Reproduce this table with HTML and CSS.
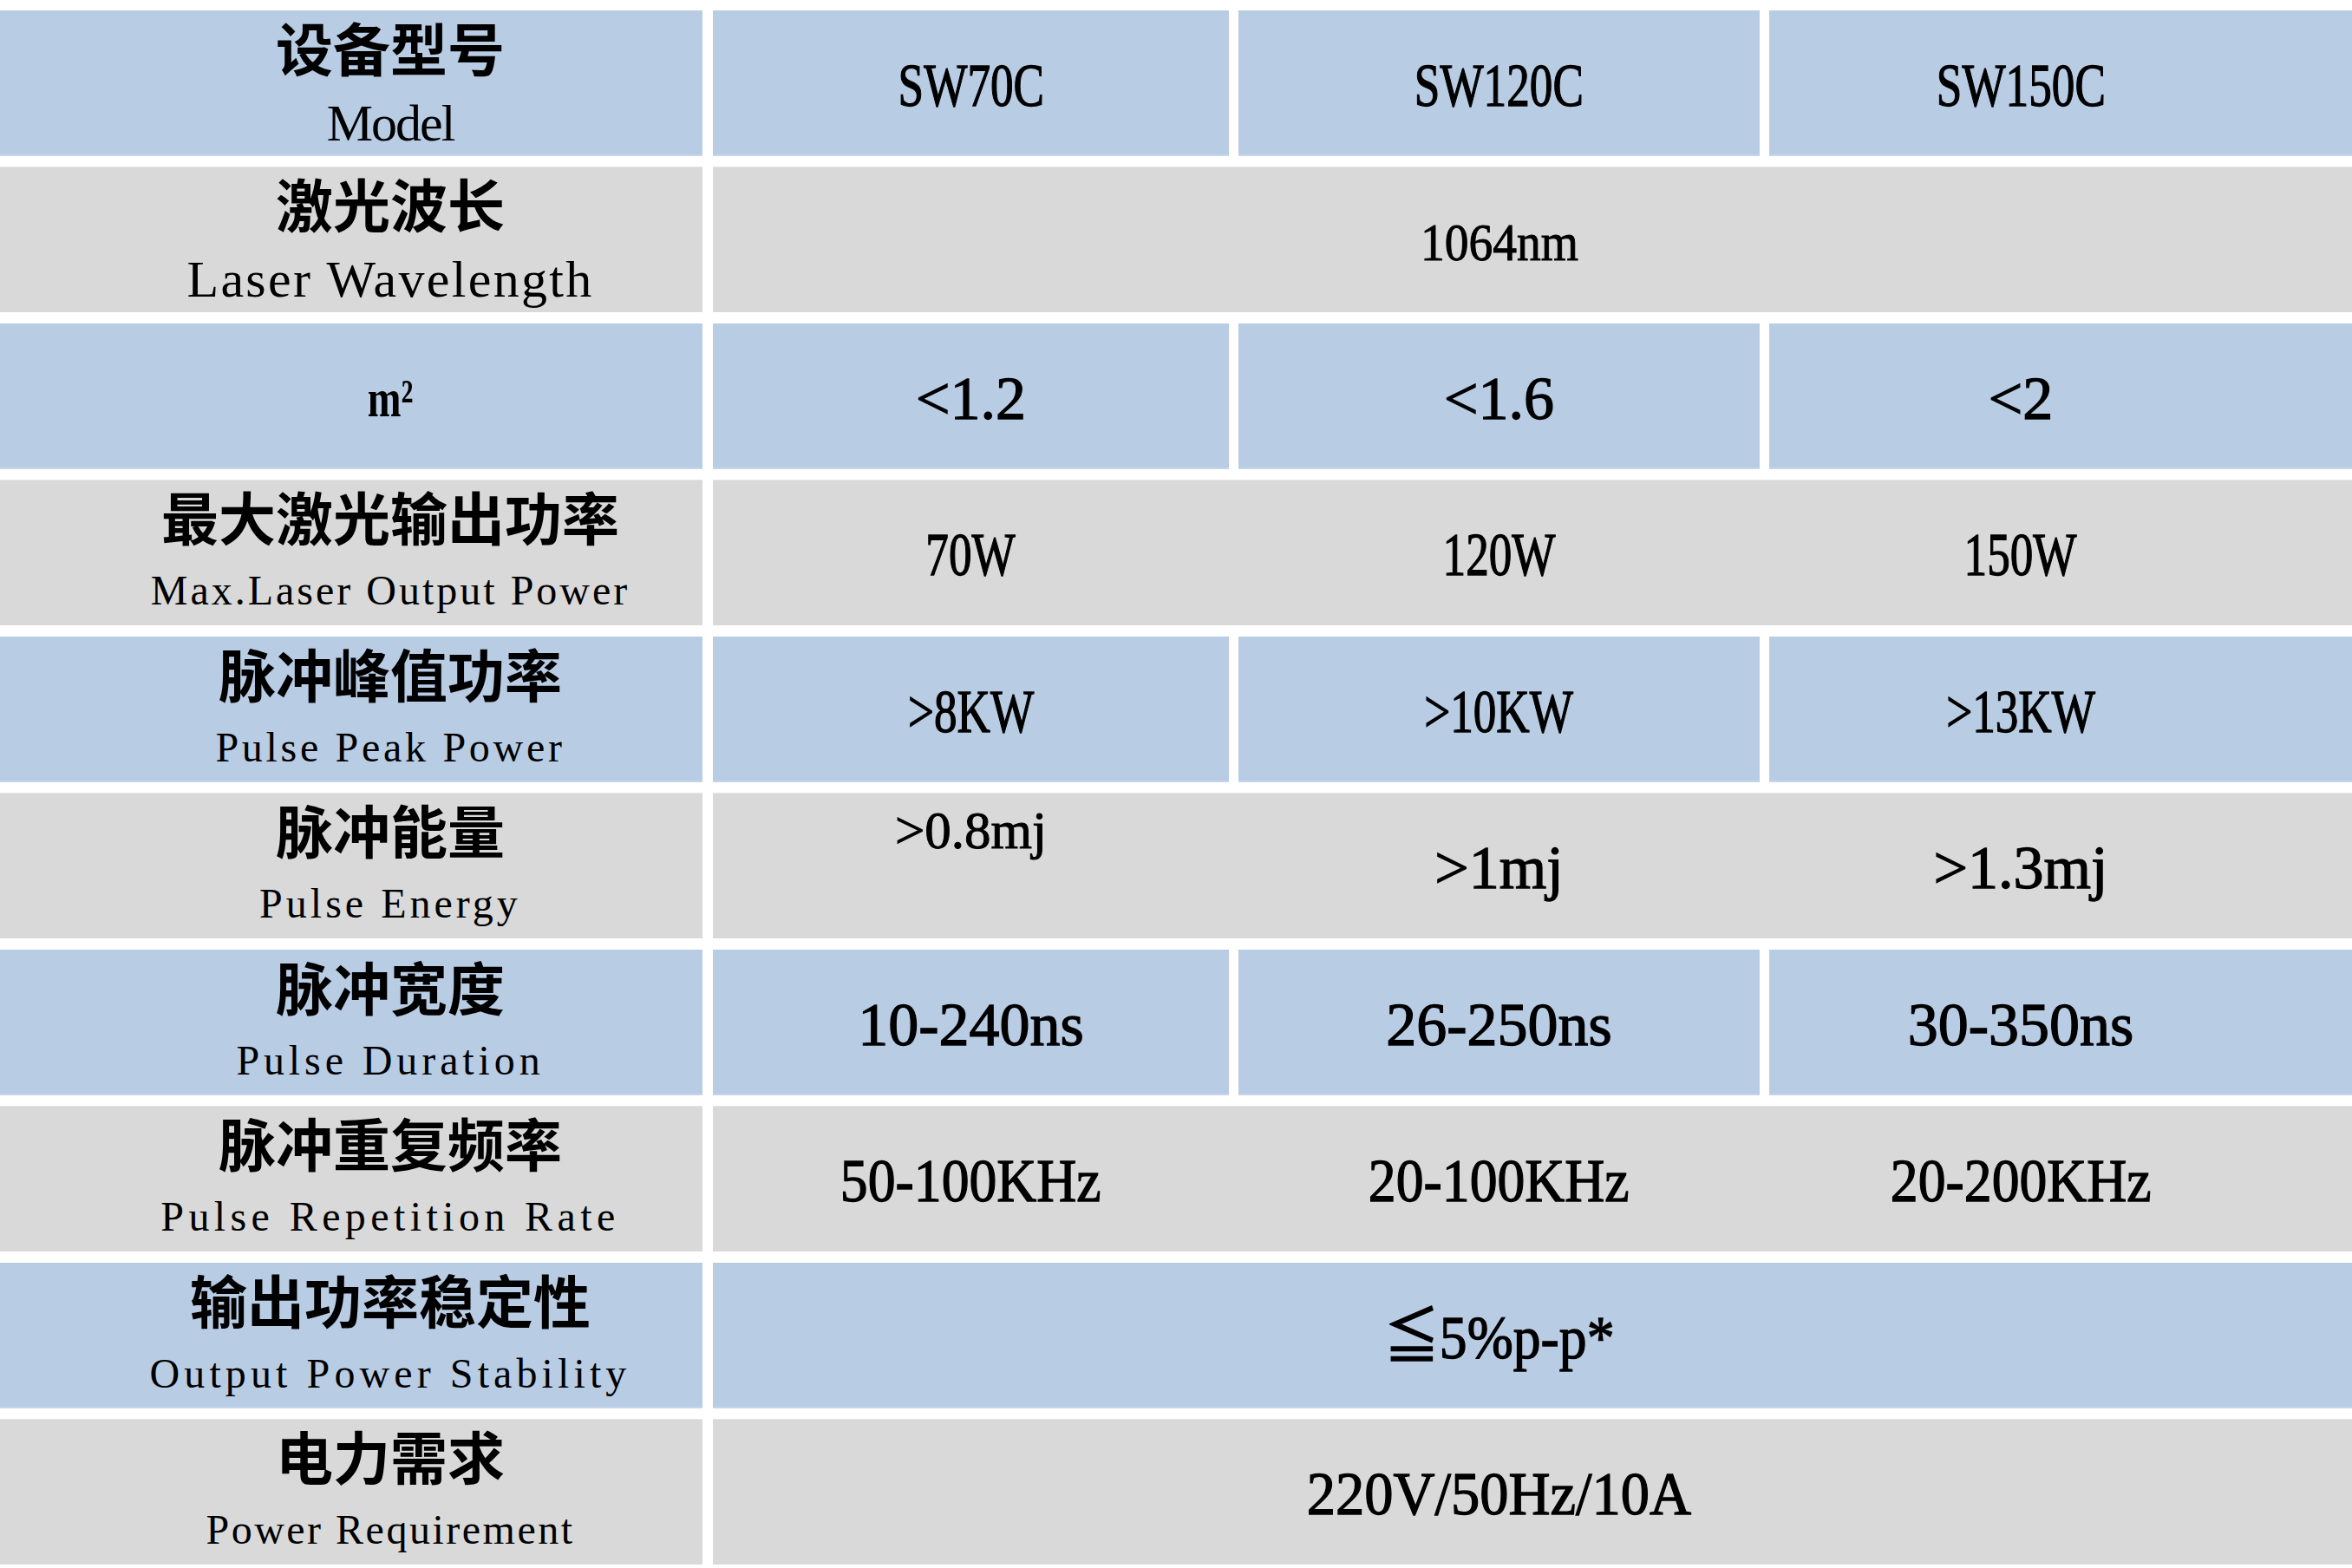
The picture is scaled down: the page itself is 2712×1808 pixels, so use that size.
FILE: index.html
```html
<!DOCTYPE html>
<html lang="zh">
<head>
<meta charset="utf-8">
<title>Specs</title>
<link rel="stylesheet" href="styles.css">
</head>
<body>
<div class="table">
  <div class="row blue">
    <div class="label"><span class="zh">设备型号</span><span class="en big ls-model">Model</span></div>
    <div class="vals">
      <div class="val"><span class="v c75">SW70C</span></div>
      <div class="val"><span class="v c75">SW120C</span></div>
      <div class="val last"><span class="v c75">SW150C</span></div>
    </div>
  </div>
  <div class="row grey">
    <div class="label"><span class="zh">激光波长</span><span class="en big ls-wave">Laser Wavelength</span></div>
    <div class="vals">
      <div class="val"></div>
      <div class="val"><span class="v small c9">1064nm</span></div>
      <div class="val last"></div>
    </div>
  </div>
  <div class="row blue">
    <div class="label single"><span class="sym">m²</span></div>
    <div class="vals">
      <div class="val"><span class="v">&lt;1.2</span></div>
      <div class="val"><span class="v">&lt;1.6</span></div>
      <div class="val last"><span class="v">&lt;2</span></div>
    </div>
  </div>
  <div class="row grey">
    <div class="label"><span class="zh">最大激光输出功率</span><span class="en ls-max">Max.Laser Output Power</span></div>
    <div class="vals">
      <div class="val"><span class="v c75">70W</span></div>
      <div class="val"><span class="v c75">120W</span></div>
      <div class="val last"><span class="v c75">150W</span></div>
    </div>
  </div>
  <div class="row blue">
    <div class="label"><span class="zh">脉冲峰值功率</span><span class="en ls-peak">Pulse Peak Power</span></div>
    <div class="vals">
      <div class="val"><span class="v c75">&gt;8KW</span></div>
      <div class="val"><span class="v c75">&gt;10KW</span></div>
      <div class="val last"><span class="v c75">&gt;13KW</span></div>
    </div>
  </div>
  <div class="row grey">
    <div class="label"><span class="zh">脉冲能量</span><span class="en ls-energy">Pulse Energy</span></div>
    <div class="vals">
      <div class="val top"><span class="v small">&gt;0.8mj</span></div>
      <div class="val"><span class="v">&gt;1mj</span></div>
      <div class="val last"><span class="v">&gt;1.3mj</span></div>
    </div>
  </div>
  <div class="row blue">
    <div class="label"><span class="zh">脉冲宽度</span><span class="en ls-dur">Pulse Duration</span></div>
    <div class="vals">
      <div class="val"><span class="v">10-240ns</span></div>
      <div class="val"><span class="v">26-250ns</span></div>
      <div class="val last"><span class="v">30-350ns</span></div>
    </div>
  </div>
  <div class="row grey">
    <div class="label"><span class="zh">脉冲重复频率</span><span class="en ls-rep">Pulse Repetition Rate</span></div>
    <div class="vals">
      <div class="val"><span class="v c9">50-100KHz</span></div>
      <div class="val"><span class="v c9">20-100KHz</span></div>
      <div class="val last"><span class="v c9">20-200KHz</span></div>
    </div>
  </div>
  <div class="row blue merged">
    <div class="label"><span class="zh">输出功率稳定性</span><span class="en ls-stab">Output Power Stability</span></div>
    <div class="vals">
      <div class="val"></div>
      <div class="val"><span class="v c9">≦5%p-p*</span></div>
      <div class="val last"></div>
    </div>
  </div>
  <div class="row grey">
    <div class="label"><span class="zh">电力需求</span><span class="en ls-req">Power Requirement</span></div>
    <div class="vals">
      <div class="val"></div>
      <div class="val"><span class="v c95">220V/50Hz/10A</span></div>
      <div class="val last"></div>
    </div>
  </div>
</div>
</body>
</html>
```

FILE: styles.css
```css
html, body {
  margin: 0;
  padding: 0;
  background: #ffffff;
}

.table {
  width: 2712px;
  padding-top: 12px;
  display: flex;
  flex-direction: column;
  gap: 12.44px;
  color: #000;
}

.row {
  display: grid;
  grid-template-columns: 810px 1fr;
  column-gap: 12px;
  height: 168px;
}

.label {
  padding-left: 90px;
  display: flex;
  flex-direction: column;
  align-items: center;
}

.label.single {
  justify-content: center;
}

.vals {
  display: grid;
  grid-template-columns: 595px 601px 1fr;
  column-gap: 11px;
}

.val {
  display: flex;
  align-items: center;
  justify-content: center;
  padding-top: 6px;
}

.val.last {
  padding-right: 92px;
}

.val.top {
  align-items: flex-start;
  padding-top: 13px;
}

.blue .label,
.blue .val {
  background: #b8cce4;
  box-shadow: inset 0 -2px 0 #c5d5ea;
}

.blue.merged .vals {
  background: #b8cce4;
  box-shadow: inset 0 -2px 0 #c5d5ea;
}

.blue.merged .val {
  background: transparent;
  box-shadow: none;
}

.grey .label,
.grey .vals {
  background: #d9d9d9;
  box-shadow: inset 0 1px 0 #e6e6e6;
}

.zh {
  font-family: "Noto Sans CJK SC", sans-serif;
  font-weight: 700;
  font-size: 66px;
  line-height: 66px;
  margin-top: 8px;
  white-space: nowrap;
}

.en {
  font-family: "Liberation Serif", serif;
  font-size: 48px;
  line-height: 48px;
  margin-top: 30px;
  white-space: pre;
  letter-spacing: 4px;
}

.en.big {
  font-size: 60px;
  line-height: 60px;
  margin-top: 26px;
}

.ls-model { letter-spacing: -2px; }
.ls-wave { letter-spacing: 2.3px; }
.ls-max { letter-spacing: 3px; }
.ls-peak { letter-spacing: 3.7px; }
.ls-energy { letter-spacing: 4px; }
.ls-dur { letter-spacing: 4.9px; }
.ls-rep { letter-spacing: 5.4px; }
.ls-stab { letter-spacing: 5.1px; }
.ls-req { letter-spacing: 2.5px; }

.v {
  font-family: "Liberation Serif", "Noto Sans CJK SC", serif;
  font-size: 70px;
  line-height: 70px;
  white-space: nowrap;
  -webkit-text-stroke: 1.3px #000;
}

.v.small {
  font-size: 61px;
  line-height: 61px;
  -webkit-text-stroke: 1px #000;
}

.c75 { transform: scaleX(0.76); }
.c9 { transform: scaleX(0.91); }
.c95 { transform: scaleX(0.95); }

.sym {
  font-family: "Liberation Serif", serif;
  font-weight: 700;
  font-size: 62px;
  line-height: 62px;
  margin-top: 4px;
  transform: scaleX(0.75);
}
```
